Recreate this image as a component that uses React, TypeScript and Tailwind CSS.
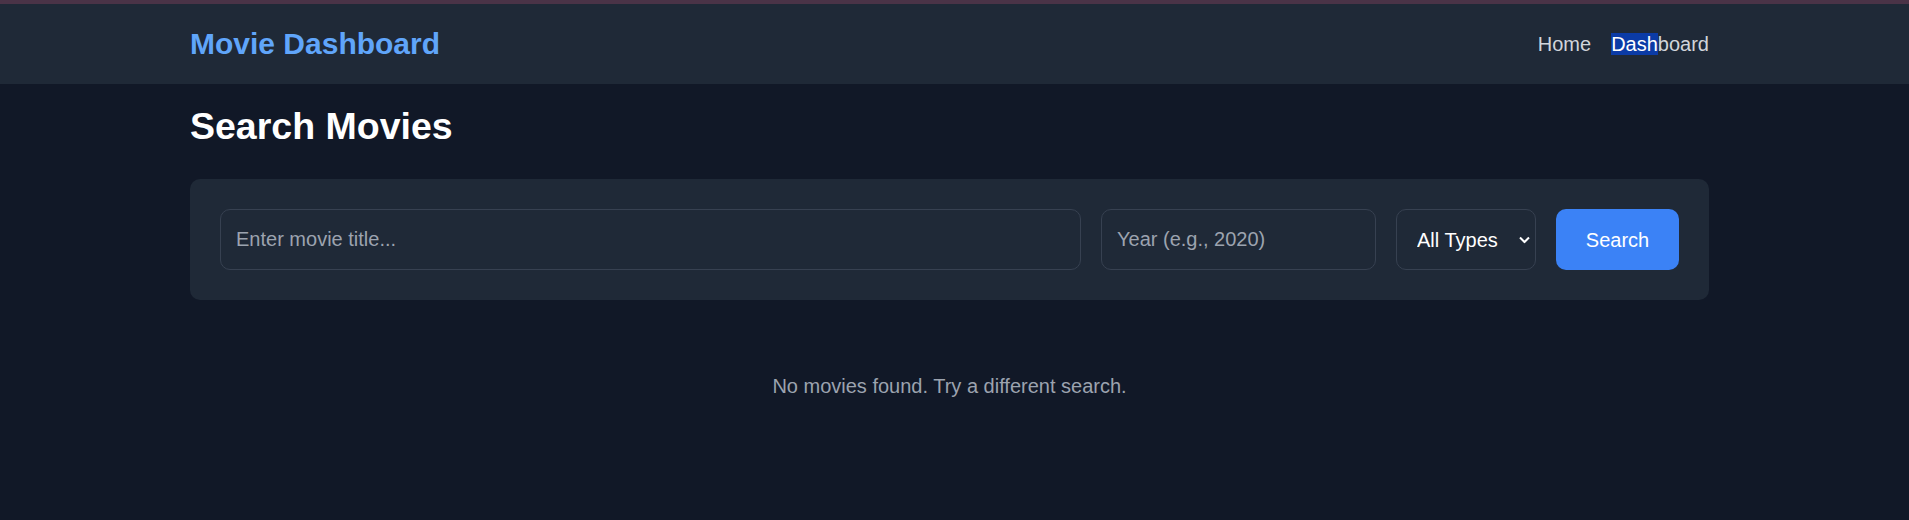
import { useState } from "react";

const App = () => {
  const [query, setQuery] = useState("");
  const [year, setYear] = useState("");
  const [type, setType] = useState("");

  return (
    <div className="min-h-[520px] bg-[#111827] font-['Liberation_Sans',Arial,sans-serif]">
      {/* top strip */}
      <div className="h-[4px] bg-[#4a3347]" />

      {/* Header */}
      <header className="bg-[#1f2937] h-[80px] flex items-center pl-[190px] pr-[200px]">
        <div className="flex-1 flex items-center justify-between">
          <h1 className="text-[30px] leading-[40px] font-bold text-[#60a5fa]">
            Movie Dashboard
          </h1>
          <nav className="flex items-center gap-[20px] text-[20px] leading-[30px] text-[#d1d5db]">
            <a href="#">Home</a>
            <a href="#">
              <span className="bg-[#0b3ba6] text-white">Dash</span>board
            </a>
          </nav>
        </div>
      </header>

      {/* Main */}
      <main className="pl-[190px] pr-[200px] pt-[20px]">
        <h2 className="text-[37.5px] leading-[45px] font-bold text-white mb-[30px]">
          Search Movies
        </h2>

        <form
          className="bg-[#1f2937] rounded-[10px] p-[30px] flex items-stretch gap-[20px]"
          onSubmit={(e) => e.preventDefault()}
        >
          <input
            type="text"
            value={query}
            onChange={(e) => setQuery(e.target.value)}
            placeholder="Enter movie title..."
            className="flex-1 h-[61px] bg-[#1f2937] border border-[#374151] rounded-[10px] px-[15px] text-[20px] text-white placeholder:text-[#9ca3af] outline-none"
          />
          <input
            type="text"
            value={year}
            onChange={(e) => setYear(e.target.value)}
            placeholder="Year (e.g., 2020)"
            className="w-[275px] h-[61px] bg-[#1f2937] border border-[#374151] rounded-[10px] px-[15px] text-[20px] text-white placeholder:text-[#9ca3af] outline-none"
          />
          <div className="relative w-[140px] h-[61px]">
            <select
              value={type}
              onChange={(e) => setType(e.target.value)}
              className="appearance-none w-full h-full bg-[#1f2937] border border-[#374151] rounded-[10px] pl-[20px] pr-[24px] text-[20px] text-white outline-none"
            >
              <option value="">All Types</option>
              <option value="movie">Movie</option>
              <option value="series">Series</option>
              <option value="episode">Episode</option>
            </select>
            {/* chevron */}
            <svg
              className="absolute right-[6px] top-1/2 -translate-y-1/2 pointer-events-none"
              width="11"
              height="7"
              viewBox="0 0 11 7"
              fill="none"
            >
              <path d="M1 1l4.5 4.5L10 1" stroke="white" strokeWidth="2" />
            </svg>
          </div>
          <button
            type="submit"
            className="w-[123px] h-[61px] bg-[#3b82f6] rounded-[10px] text-[20px] text-white"
          >
            Search
          </button>
        </form>

        <p className="mt-[71px] text-center text-[20px] leading-[30px] text-[#9ca3af]">
          No movies found. Try a different search.
        </p>
      </main>
    </div>
  );
};

export default App;
